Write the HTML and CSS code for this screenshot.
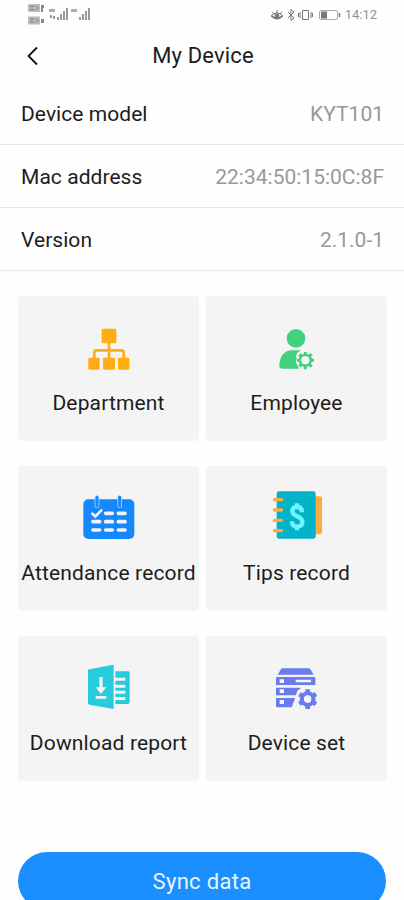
FILE: index.html
```
<!DOCTYPE html>
<html lang="en">
<head>
    <meta charset="UTF-8">
    <meta name="viewport" content="width=device-width, initial-scale=1.0">
    <title>My Device</title>
    <link rel="stylesheet" href="styles.css">
</head>
<body>
    <div class="status-bar">
        <svg class="signals" width="64" height="26" viewBox="0 0 64 26">
            <path d="M0 4h12v8H0zM0 16.500h12v8H0z" fill="#bbb"/>
            <path d="M2 6.500h4M2 9.500h4M8 6l2 2-2 2M2 19h4M2 22h4M8 18.500l2 2-2 2" fill="none" stroke="#777"/>
            <path d="M13 5h3v3h-1v4h-2zM13 19h3v4h-3z" fill="#888"/>
            <g fill="#999">
                <path d="M21 9h6v3h-6zM43 9h6v3h-6z" opacity=".8"/>
                <path d="M22 15h2v3h-2zM25 16h2v3h-2z"/>
                <path d="M29 17h2v3h-2zM32 14h2v6h-2zM35 11h2v9h-2zM38 8h2v12h-2z"/>
                <path d="M51 17h2v3h-2zM54 14h2v6h-2zM57 11h2v9h-2zM60 8h2v12h-2z"/>
            </g>
        </svg>
        <div class="status-right">
            <svg width="72" height="14" viewBox="0 0 72 14" fill="none" stroke="#777">
                <path d="M1 8q6-6 12 0q-6 6-12 0M2 4l2 2M7 2v3M12 4l-2 2"/>
                <path d="M2 8q5 5 10 0" stroke-width="1.500"/>
                <circle cx="7" cy="8" r="2" fill="#777"/>
                <path d="M18 4l6 6-3 2.500V1.500L24 4l-6 6"/>
                <path d="M32.500 2.500h6v9h-6zM30 4v6M41 4v6M28.500 5v4M42.500 5v4"/>
                <rect x="49.500" y="2.500" width="18" height="9" rx="1.500" stroke="#aaa"/>
                <path d="M51 3.500h6v7h-6z" fill="#777" stroke="none"/>
                <path d="M69.500 5v4" stroke-width="1.500"/>
            </svg>
            <span class="clock">14:12</span>
        </div>
    </div>

    <header>
        <svg class="back" width="12" height="20" viewBox="0 0 12 20">
            <path d="M10 1.500L1.500 10 10 18.500" fill="none" stroke="#111" stroke-width="1.800"/>
        </svg>
        <h1>My Device</h1>
    </header>

    <main>
        <ul class="info-list">
            <li><span>Device model</span><span class="value">KYT101</span></li>
            <li><span>Mac address</span><span class="value">22:34:50:15:0C:8F</span></li>
            <li><span>Version</span><span class="value">2.1.0-1</span></li>
        </ul>

        <div class="menu-grid">
            <div class="menu-card">
                <svg viewBox="27 15 180 180" fill="#ffad12">
                    <rect x="95" y="41" width="44" height="44" rx="4"/>
                    <rect x="55" y="128" width="34" height="36" rx="4"/>
                    <rect x="99" y="128" width="36" height="36" rx="4"/>
                    <rect x="144" y="128" width="34" height="36" rx="4"/>
                    <path d="M117 84v46M73 130v-18q0-6 6-6h76q6 0 6 6v18" fill="none" stroke="#ffad12" stroke-width="8"/>
                </svg>
                <p>Department</p>
            </div>
            <div class="menu-card">
                <svg viewBox="20 15 180 180" fill="#42d17c">
                    <circle cx="107" cy="70" r="28"/>
                    <path d="M91 106h29q-3 5-9 7l-4 9 2 10-3 9 6 12 5 8H65q-9 0-8-10 2-40 34-45z"/>
                    <circle cx="135" cy="136" r="16" fill="none" stroke="#42d17c" stroke-width="8"/>
                    <path d="M135 120v-9M135 152v11M119 136h-9M151 136h10M124 125l-7-7M146 147l8 8M124 147l-7 7M146 125l8-8" stroke="#42d17c" stroke-width="9"/>
                    <circle cx="135" cy="136" r="12" fill="#f4f4f4"/>
                </svg>
                <p>Employee</p>
            </div>
            <div class="menu-card">
                <svg viewBox="27 15 180 180">
                    <rect x="40" y="43" width="153" height="119" rx="15" fill="#1589fb"/>
                    <g fill="none" stroke-linecap="round">
                        <path d="M81 38v24M149 38v24" stroke="#a9d3fb" stroke-width="14"/>
                        <path d="M81 37v25M149 37v25" stroke="#1589fb" stroke-width="9"/>
                        <path d="M67 86l9 8 18-18" stroke="#f4f4f4" stroke-width="8"/>
                        <path d="M107 85h20M145 85h20M69 110h20M107 110h20M145 110h20M69 135h20M107 135h20M145 135h20" stroke="#f4f4f4" stroke-width="11"/>
                    </g>
                </svg>
                <p>Attendance record</p>
            </div>
            <div class="menu-card">
                <svg viewBox="20 15 180 180">
                    <rect x="150" y="34" width="35" height="114" rx="7" fill="#fbab40"/>
                    <rect x="49" y="19" width="117" height="142" rx="7" fill="#04b3c8"/>
                    <path d="M42 44h22M42 75h22M42 106h22M42 137h22" stroke="#fbab40" stroke-width="10" stroke-linecap="round"/>
                    <path d="M125 82q0-16-15-16-14 0-14 13 0 9 14 15 16 6 16 18 0 13-16 13-15 0-15-16M110 55v12M110 124v12" fill="none" stroke="#70f4ff" stroke-width="13"/>
                </svg>
                <p>Tips record</p>
            </div>
            <div class="menu-card">
                <svg viewBox="27 15 180 180">
                    <path d="M54 47q0-3 4-4l73-14v133l-73-13q-4-1-4-4z" fill="#27cbd9"/>
                    <path d="M136 49h39q4 0 4 4v89q0 5-5 5h-38v-12h30v-9h-30v-10h30v-9h-30V98h30v-9h-30V77h30v-9h-30z" fill="#27cbd9"/>
                    <path d="M88 66h10v31h11l-16 20-16-20h11zM77 123h32v8H77z" fill="#f4f4f4"/>
                </svg>
                <p>Download report</p>
            </div>
            <div class="menu-card">
                <svg viewBox="20 15 180 180" fill="#6a7bef">
                    <path d="M66 40h78q6 0 8 6l8 13H52l8-13q2-6 6-6z"/>
                    <path d="M51 66h110q4 0 4 4v20H47V70q0-4 4-4zM47 98h75q-3 6-9 7-5 7-6 16H47zM47 129h57q-1 9-6 16-1 7-4 12H51q-4 0-4-4z"/>
                    <path d="M58 73h13v11H58zM106 74h46v8h-46zM58 103h13v11H58zM58 135h13v12H58z" fill="#f4f4f4"/>
                    <circle cx="142" cy="132" r="17" fill="none" stroke="#6a7bef" stroke-width="13"/>
                    <path d="M142 103v12M142 149v13M117 117.500l10 6M157 141l10 6M117 146.500l10-6M157 123l10-6" stroke="#6a7bef" stroke-width="14"/>
                    <circle cx="142" cy="132" r="11" fill="#f4f4f4"/>
                </svg>
                <p>Device set</p>
            </div>
        </div>

        <button class="sync-btn">Sync data</button>
    </main>
</body>
</html>
```
FILE: styles.css
```
* {
    box-sizing: border-box;
}
html, body {
    height: 100%;
    overflow: hidden;
}
body {
    font-family: Roboto, sans-serif;
    font-size: 21px;
    letter-spacing: 0.05px;
    margin: 0;
    background-color: #fefefe;
    color: #1c1c1c;
}
.status-bar {
    display: flex;
    justify-content: space-between;
    height: 30px;
    padding: 0 27px 0 28px;
}
.status-right {
    display: flex;
    align-items: center;
    gap: 3px;
    height: 29px;
}
.clock {
    font-size: 13px;
    letter-spacing: 0;
    color: #929292;
}
header {
    display: grid;
    grid-template-columns: 60px 1fr 60px;
    align-items: center;
    height: 51px;
}
.back {
    margin-left: 27px;
}
h1 {
    margin: 0;
    padding-left: 2px;
    font-size: 22px;
    font-weight: 400;
    letter-spacing: 0.15px;
    text-align: center;
}
.info-list {
    list-style-type: none;
    margin: 0;
    padding: 0;
}
.info-list li {
    display: flex;
    justify-content: space-between;
    align-items: center;
    height: 63px;
    padding: 2px 20px 0 21px;
    border-bottom: 1px solid #e8e8e8;
}
.info-list li:first-child {
    height: 64px;
    padding-top: 3px;
}
.value {
    letter-spacing: 0;
    color: #999;
}
.menu-grid {
    display: grid;
    grid-template-columns: 1fr 1fr;
    gap: 25px 7px;
    padding: 25px 17px 0 18px;
}
.menu-card {
    display: flex;
    flex-direction: column;
    align-items: center;
    height: 145px;
    padding-top: 24px;
    background-color: #f4f4f4;
    border-radius: 4px;
}
.menu-card svg {
    width: 60px;
    height: 60px;
}
.menu-card p {
    margin: 11px 0 0;
    line-height: 25px;
    letter-spacing: 0.15px;
    white-space: nowrap;
}
.sync-btn {
    display: block;
    width: 368px;
    height: 58px;
    margin: 71px 0 0 18px;
    border: none;
    border-radius: 29px;
    background-color: #1b8fff;
    color: #eaf5ff;
    font: inherit;
    font-size: 22px;
    letter-spacing: 0.3px;
}
```
